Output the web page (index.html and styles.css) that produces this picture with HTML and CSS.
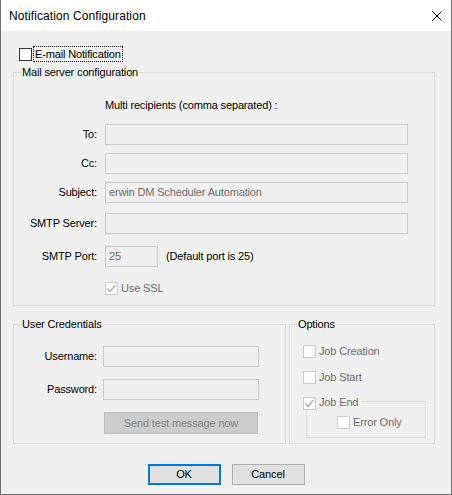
FILE: index.html
```html
<!DOCTYPE html>
<html>
<head>
<meta charset="utf-8">
<title>Notification Configuration</title>
<link rel="stylesheet" href="styles.css">
</head>
<body>
<div class="window">
  <div class="titlebar">
    <span class="title">Notification Configuration</span>
    <svg class="close" width="10" height="10" viewBox="0 0 10 10"><path d="M0.5 0.5 L9.5 9.5 M9.5 0.5 L0.5 9.5" stroke="#000" stroke-width="1" fill="none"/></svg>
  </div>
  <div class="content">
    <div class="check-row main-check">
      <span class="box enabled"></span>
      <span class="focus">E-mail Notification</span>
    </div>

    <fieldset class="group mail">
      <legend>Mail server configuration</legend>
      <div class="hint">Multi recipients (comma separated) :</div>
      <div class="frow r-to"><span class="flabel">To:</span><div class="input wide"></div></div>
      <div class="frow r-cc"><span class="flabel">Cc:</span><div class="input wide"></div></div>
      <div class="frow r-subj"><span class="flabel">Subject:</span><div class="input wide">erwin DM Scheduler Automation</div></div>
      <div class="frow r-srv"><span class="flabel">SMTP Server:</span><div class="input wide"></div></div>
      <div class="frow r-port"><span class="flabel">SMTP Port:</span><div class="input port">25</div><span class="note">(Default port is 25)</span></div>
      <div class="check-row ssl">
        <span class="box disabled"><svg width="11" height="11" viewBox="0 0 11 11"><path d="M1.5 5.5 L4 8.5 L9.5 2" stroke="#a8a8a8" stroke-width="1.2" fill="none"/></svg></span>
        <span class="dtext">Use SSL</span>
      </div>
    </fieldset>

    <div class="lower">
      <fieldset class="group creds">
        <legend>User Credentials</legend>
        <div class="crow r-user"><span class="clabel">Username:</span><div class="input cin"></div></div>
        <div class="crow r-pass"><span class="clabel">Password:</span><div class="input cin"></div></div>
        <div class="send">Send test message now</div>
      </fieldset>
      <fieldset class="group options">
        <legend>Options</legend>
        <div class="check-row opt o-create"><span class="box disabled"></span><span class="dtext">Job Creation</span></div>
        <div class="check-row opt o-start"><span class="box disabled"></span><span class="dtext">Job Start</span></div>
        <fieldset class="inner">
          <legend class="check-legend">
            <span class="box disabled"><svg width="11" height="11" viewBox="0 0 11 11"><path d="M1.5 5.5 L4 8.5 L9.5 2" stroke="#a8a8a8" stroke-width="1.2" fill="none"/></svg></span>
            <span class="dtext">Job End</span>
          </legend>
          <div class="check-row err"><span class="box disabled"></span><span class="dtext">Error Only</span></div>
        </fieldset>
      </fieldset>
    </div>

    <div class="buttons">
      <div class="btn default">OK</div>
      <div class="btn">Cancel</div>
    </div>
  </div>
</div>
</body>
</html>
```

FILE: styles.css
```css
* { box-sizing: border-box; }
html, body { margin: 0; padding: 0; }
body {
  width: 452px;
  height: 495px;
  overflow: hidden;
  background: #ffffff;
  font-family: "Liberation Sans", Arial, sans-serif;
  font-size: 11px;
  letter-spacing: -0.15px;
  line-height: 13px;
  color: #000;
}
.window {
  width: 452px;
  height: 495px;
  border: 1px solid #6f6f6f;
  border-top: none;
  background: #f0f0f0;
}
.titlebar {
  height: 31px;
  background: #ffffff;
  display: flex;
  align-items: center;
  justify-content: space-between;
  padding: 0 9px 0 8px;
}
.title {
  font-size: 12px;
  letter-spacing: 0.1px;
  line-height: 31px;
  padding-top: 1px;
}
.close { display: block; }

.content {
  padding-left: 12px;
}

/* checkboxes */
.check-row {
  display: flex;
  align-items: flex-start;
  height: 13px;
}
.box {
  width: 13px;
  height: 13px;
  flex: none;
  border: 1px solid #333333;
  background: #ffffff;
  display: flex;
  align-items: center;
  justify-content: center;
}
.box.disabled {
  border-color: #cccccc;
  background: #ffffff;
}
.box svg { display: block; }
.dtext {
  color: #6d6d6d;
  margin-left: 3px;
  line-height: 13px;
}

.main-check {
  padding-top: 15px;
  height: 31px;
}
.main-check .box {
  margin-top: 2px;
  margin-left: 6px;
}
.focus {
  margin-left: 1px;
  border: 1px dotted #000;
  padding: 1px 1px 0 1px;
  height: 16px;
  line-height: 13px;
}

/* group boxes */
.group, .inner {
  margin: 0;
  padding: 0;
  min-width: 0;
  border: 1px solid #dcdcdc;
}
.group > legend {
  margin-left: 7px;
  padding: 0 1px;
  line-height: 13px;
}

.group.mail {
  margin-top: 4px;
  width: 422px;
  padding-bottom: 10px;
}
.hint {
  margin-top: 20px;
  margin-left: 91px;
}
.frow {
  display: flex;
  align-items: center;
  height: 21px;
}
.flabel {
  width: 83px;
  flex: none;
  text-align: right;
  margin-right: 8px;
}
.r-to { margin-top: 12px; }
.r-cc { margin-top: 8px; }
.r-subj { margin-top: 8px; }
.r-srv { margin-top: 10px; }
.r-port { margin-top: 12px; }

.input {
  height: 21px;
  border: 1px solid #cccccc;
  background: #f0f0f0;
  color: #6d6d6d;
  padding-left: 3px;
  line-height: 19px;
  flex: none;
}
.input.wide { width: 303px; }
.input.port { width: 53px; }
.note { margin-left: 8px; }

.ssl {
  margin-top: 15px;
  margin-left: 91px;
}

/* lower groups */
.lower {
  margin-top: 12px;
  display: flex;
  align-items: stretch;
}
.group.creds {
  width: 273px;
  padding-bottom: 9px;
}
.group.options {
  width: 146px;
  margin-left: 3px;
}
.crow {
  display: flex;
  align-items: center;
  height: 21px;
}
.clabel {
  width: 83px;
  flex: none;
  text-align: right;
  margin-right: 6px;
}
.r-user { margin-top: 15px; }
.r-pass { margin-top: 12px; }
.input.cin { width: 156px; }
.send {
  margin-top: 12px;
  margin-left: 90px;
  width: 154px;
  height: 22px;
  border: 1px solid #bfbfbf;
  background: #cccccc;
  color: #838383;
  text-align: center;
  line-height: 20px;
}

.opt { margin-left: 13px; }
.o-create { margin-top: 14px; }
.o-start { margin-top: 13px; }
.group .inner {
  margin: 11px 8px 5px 16px;
  padding: 0 0 8px 0;
}
.check-legend {
  display: flex;
  align-items: flex-start;
  height: 13px;
  margin-left: -4px;
  padding: 0 3px 0 0;
}
.check-legend .box { margin-top: 2px; }
.check-legend .dtext { padding-top: 1px; }
.err {
  margin-top: 8px;
  margin-left: 30px;
}

/* buttons */
.buttons {
  margin-top: 20px;
  display: flex;
  justify-content: center;
  gap: 11px;
  padding-right: 12px;
}
.btn {
  width: 73px;
  height: 21px;
  border: 1px solid #adadad;
  background: #e1e1e1;
  text-align: center;
  line-height: 19px;
}
.btn.default {
  border: 2px solid #0078d7;
  line-height: 17px;
}
```
